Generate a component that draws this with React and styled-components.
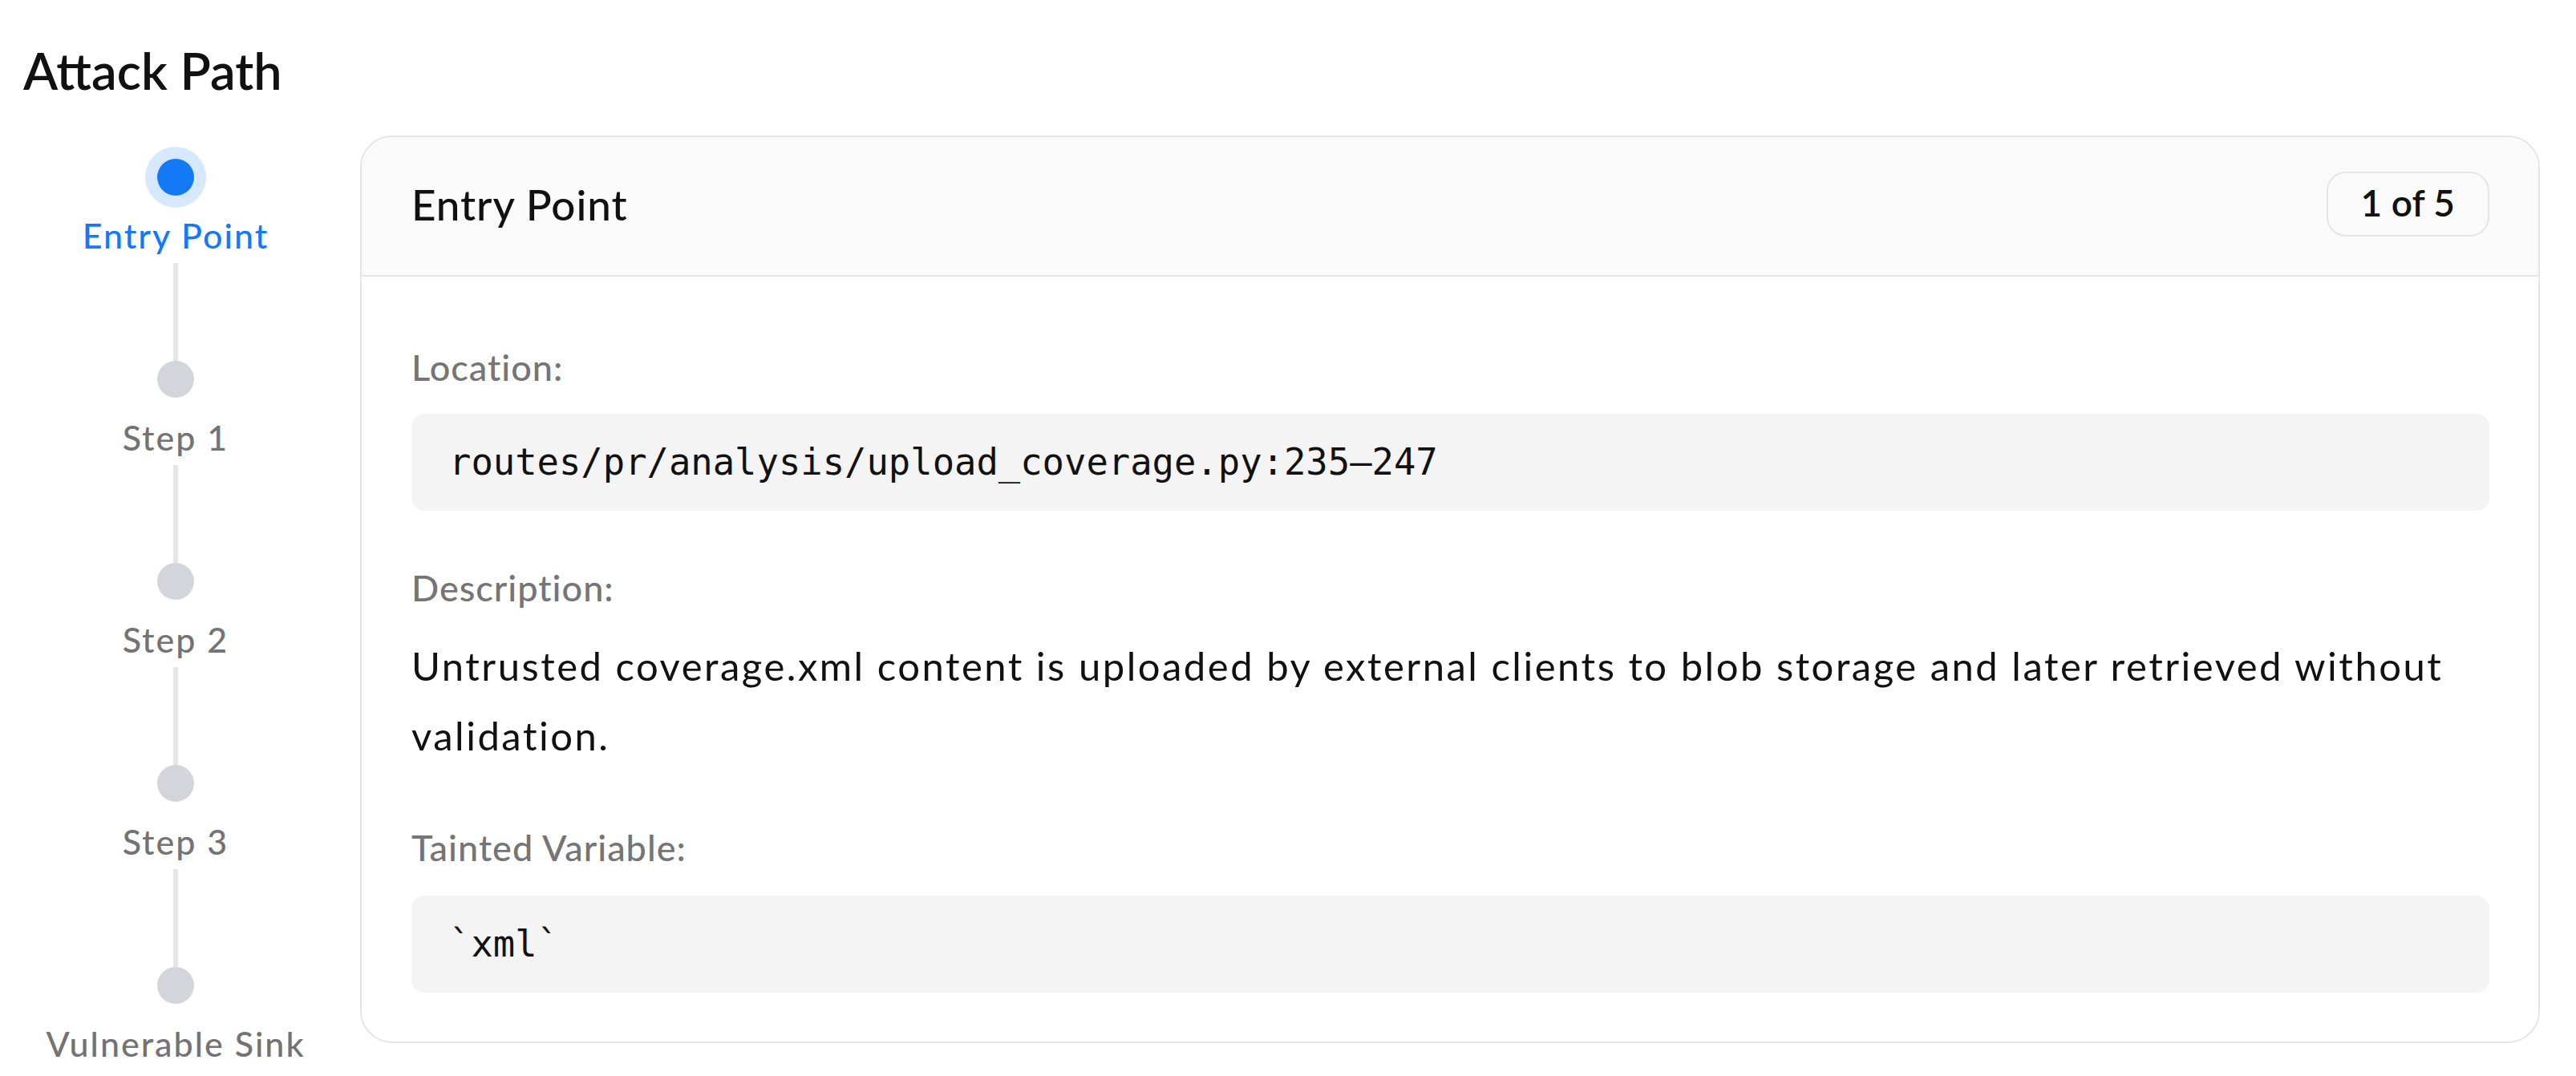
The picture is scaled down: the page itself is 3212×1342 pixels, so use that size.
import styled, { createGlobalStyle } from "styled-components";

const GlobalStyle = createGlobalStyle`
  html, body {
    margin: 0;
    padding: 0;
    background: #ffffff;
  }

  body {
    font-family: Lato, "Noto Sans", sans-serif;
    color: #111111;
  }
`;

const Page = styled.div`
  padding: 50px 45px 40px 29px;
`;

const Title = styled.h2`
  margin: 0 0 43px;
  font-size: 63px;
  line-height: 76px;
  font-weight: 600;
  color: #111111;
`;

const Row = styled.div`
  display: flex;
  align-items: flex-start;
  gap: 40px;
`;

const Timeline = styled.div`
  width: 380px;
  flex-shrink: 0;
  padding-top: 29px;
  display: flex;
  flex-direction: column;
  align-items: center;
`;

const Step = styled.div`
  display: flex;
  flex-direction: column;
  align-items: center;
`;

const Dot = styled.div`
  width: 46px;
  height: 46px;
  border-radius: 50%;
  background: ${(p) => (p.$active ? "#1479f5" : "#d4d5da")};
  box-shadow: ${(p) => (p.$active ? "0 0 0 15px #d6e8fd" : "none")};
`;

const StepLabel = styled.div`
  margin-top: 24px;
  font-size: 43px;
  line-height: 52px;
  font-weight: 500;
  letter-spacing: 2px;
  white-space: nowrap;
  color: ${(p) => (p.$active ? "#1479f5" : "#737373")};
`;

const Connector = styled.div`
  width: 6px;
  height: 122px;
  margin-top: 8px;
  background: #e6e6e6;
`;

const Card = styled.div`
  flex: 1;
  border: 2px solid #e5e5e5;
  border-radius: 40px;
  overflow: hidden;
  background: #ffffff;
`;

const CardHeader = styled.div`
  height: 174px;
  box-sizing: border-box;
  padding: 0 61px 6px 62px;
  display: flex;
  align-items: center;
  justify-content: space-between;
  background: #fafafa;
  border-bottom: 2px solid #e5e5e5;
`;

const CardTitle = styled.div`
  font-size: 53px;
  font-weight: 500;
  letter-spacing: 0.9px;
  color: #111111;
`;

const Badge = styled.div`
  height: 81px;
  box-sizing: border-box;
  padding: 0 41px 4px;
  display: flex;
  align-items: center;
  border: 2px solid #e5e5e5;
  border-radius: 24px;
  background: #fafafa;
  font-size: 46px;
  font-weight: 600;
  color: #111111;
`;

const CardBody = styled.div`
  padding: 81px 61px 61px 62px;
  display: flex;
  flex-direction: column;
  gap: 64px;
`;

const Field = styled.div`
  display: flex;
  flex-direction: column;
`;

const FieldLabel = styled.div`
  font-size: 45px;
  line-height: 64px;
  font-weight: 500;
  letter-spacing: 1px;
  color: #757575;
  margin-bottom: ${(p) => p.$gap}px;
`;

const Code = styled.div`
  background: #f4f4f4;
  border-radius: 16px;
  padding: 26px 47px;
  font-family: "DejaVu Sans Mono", "Liberation Mono", monospace;
  font-size: 45.5px;
  line-height: 69px;
  color: #111111;
`;

const Text = styled.p`
  margin: 0;
  font-size: 49px;
  line-height: 87px;
  font-weight: 400;
  letter-spacing: 2.5px;
  color: #111111;
`;

const steps = ["Entry Point", "Step 1", "Step 2", "Step 3", "Vulnerable Sink"];

export default function App() {
  return (
    <>
      <GlobalStyle />
      <Page>
        <Title>Attack Path</Title>
        <Row>
          <Timeline>
            {steps.map((s, i) => (
              <Step key={s}>
                <Dot $active={i === 0} />
                <StepLabel $active={i === 0}>{s}</StepLabel>
                {i < steps.length - 1 && <Connector />}
              </Step>
            ))}
          </Timeline>

          <Card>
            <CardHeader>
              <CardTitle>Entry Point</CardTitle>
              <Badge>1 of 5</Badge>
            </CardHeader>
            <CardBody>
              <Field>
                <FieldLabel $gap={26}>Location:</FieldLabel>
                <Code>routes/pr/analysis/upload_coverage.py:235–247</Code>
              </Field>
              <Field>
                <FieldLabel $gap={22}>Description:</FieldLabel>
                <Text>
                  Untrusted coverage.xml content is uploaded by external clients
                  to blob storage and later retrieved without validation.
                </Text>
              </Field>
              <Field>
                <FieldLabel $gap={28}>Tainted Variable:</FieldLabel>
                <Code>`xml`</Code>
              </Field>
            </CardBody>
          </Card>
        </Row>
      </Page>
    </>
  );
}
